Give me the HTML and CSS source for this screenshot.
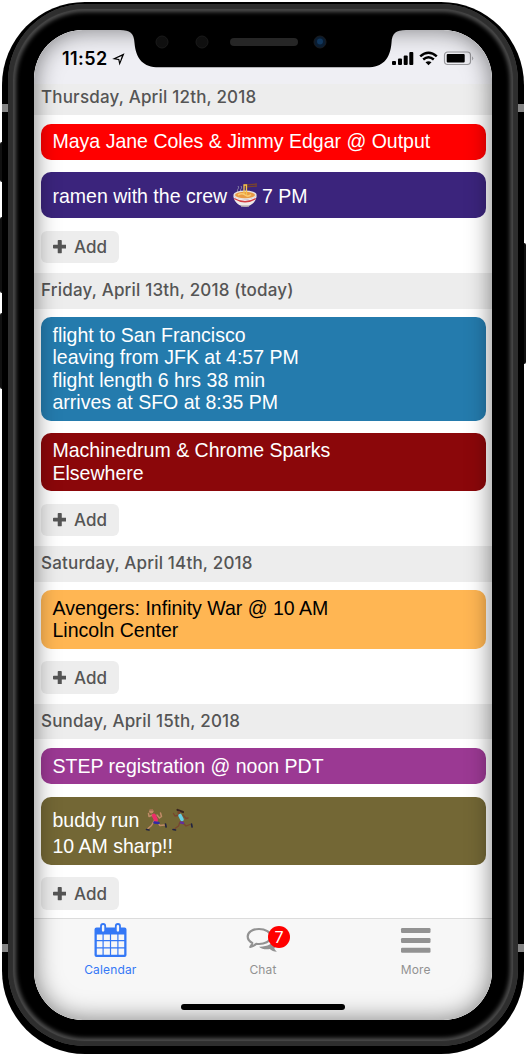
FILE: index.html
```html
<!DOCTYPE html>
<html lang="en">
<head>
<meta charset="utf-8">
<title>Calendar</title>
<link rel="stylesheet" href="styles.css">
</head>
<body>
<svg class="defs" width="0" height="0" aria-hidden="true">
  <symbol id="plus" viewBox="0 0 14 14"><path d="M5.700 0h2.600q.8 0 .8.8v4.100h4.100q.8 0 .8.8v2.400q0 .8-.8.800H9.100v4.300q0 .8-.8.8H5.700q-.8 0-.8-.8V8.900H.8q-.8 0-.8-.8V5.700q0-.8.8-.8h4.100V.8q0-.8.8-.8z"/></symbol>
</svg>
<div class="device">
  <i class="button mute"></i><i class="button vol-up"></i><i class="button vol-down"></i><i class="button power"></i>
  <div class="shell"></div>
  <i class="antenna at-left at-top"></i><i class="antenna at-right at-top"></i>
  <i class="antenna at-left at-bottom"></i><i class="antenna at-right at-bottom"></i>
  <div class="bezel"></div>
  <div class="screen">
    <header class="status">
      <span class="time">11:52</span>
      <svg class="location" width="13" height="13" viewBox="0 0 13 13"><path d="M12.500.3 7.500 12.500 6.300 7 .2 6z M9.800 2.900 4 5.500 7.300 6.100 7.900 8.700z" fill="#000" fill-rule="evenodd"/></svg>
      <svg class="signals" width="84" height="18" viewBox="0 0 84 18">
        <g fill="#000"><rect x="2" y="11" width="4" height="4" rx="1"/><rect x="8" y="8.500" width="4" height="6.500" rx="1"/><rect x="13.700" y="5.500" width="4" height="9.500" rx="1"/><rect x="19.300" y="2" width="4" height="13" rx="1"/></g>
        <g fill="none" stroke="#000" stroke-width="2.500"><path d="M30.200 6.400q8.300-7.200 16.600 0"/><path d="M33.200 9.500q5.300-4.500 10.600 0"/></g>
        <path d="M35.500 12.300q3-2.300 6 0l-3 3z"/>
        <rect x="54.500" y="2" width="26" height="12.500" rx="3.200" fill="none" stroke="#9a9a9e" stroke-width="1.200"/>
        <rect x="56.700" y="4" width="18" height="8.600" rx="1"/>
        <path d="M82.200 6.200q2 2 0 4.400z" fill="#9a9a9e"/>
      </svg>
    </header>
    <main class="days">
      <section class="day">
        <h2 class="date clipped">Thursday, April 12th, 2018</h2>
        <div class="list">
          <div class="event red">Maya Jane Coles &amp; Jimmy Edgar @ Output</div>
          <div class="event indigo">ramen with the crew <svg class="bowl" role="img" aria-label="ramen" width="26" height="26" viewBox="0 0 26 26">
            <path d="M6 10c-2-3 2-3 0-6M9 10c-2-3 2-3 0-6" stroke="#8e86aa" stroke-width="1" fill="none"/>
            <path d="M12 3.200 25 2M12 5.200l13-1.200" stroke="#77432f" stroke-width="1.300"/>
            <ellipse cx="13" cy="13" rx="11.700" ry="4.600" fill="#e8e1dd"/><ellipse cx="13" cy="13" rx="10" ry="3.300" fill="#e99a45"/>
            <path d="M12 13V3h2.500v11" stroke="#f4c34d" stroke-width="1.300" fill="none"/><path d="M6 13q4-2.500 7 0t6-.5" stroke="#f8cb73" stroke-width="1.500" fill="none"/>
            <path d="M1.300 13.500C2 21 8 24.500 13 24.500S24 21 24.700 13.500C20 18.500 6 18.500 1.300 13.500z" fill="#efeae8"/>
            <path d="M2.200 16.500q10.800 6.500 21.600 0" stroke="#d33b40" stroke-width="1.300" fill="none"/><path d="M9 24h8" stroke="#bcb3b0" stroke-width="1.500"/>
          </svg> 7 PM</div>
          <button class="add"><svg class="plus"><use href="#plus"/></svg>Add</button>
        </div>
      </section>
      <section class="day">
        <h2 class="date">Friday, April 13th, 2018 (today)</h2>
        <div class="list">
          <div class="event blue">flight to San Francisco<br>leaving from JFK at 4:57 PM<br>flight length 6 hrs 38 min<br>arrives at SFO at 8:35 PM</div>
          <div class="event maroon">Machinedrum &amp; Chrome Sparks<br>Elsewhere</div>
          <button class="add"><svg class="plus"><use href="#plus"/></svg>Add</button>
        </div>
      </section>
      <section class="day">
        <h2 class="date">Saturday, April 14th, 2018</h2>
        <div class="list">
          <div class="event orange">Avengers: Infinity War @ 10 AM<br>Lincoln Center</div>
          <button class="add"><svg class="plus"><use href="#plus"/></svg>Add</button>
        </div>
      </section>
      <section class="day">
        <h2 class="date">Sunday, April 15th, 2018</h2>
        <div class="list">
          <div class="event purple">STEP registration @ noon PDT</div>
          <div class="event olive">buddy run <svg class="runners" role="img" aria-label="two runners" width="50" height="24" viewBox="0 0 50 24">
            <g fill="none" stroke-linecap="round" stroke-linejoin="round">
              <path d="M9 13 6.500 17.500 3 20.500M12 14l3 3.500 4.500-.5M7.500 7 4 8.500 3.500 5.500M12 7l2.500 3 2-1.500-1-3.500" stroke="#c08a66" stroke-width="1.500"/>
              <path d="M8.800 7.500 11 12" stroke="#ed2e6a" stroke-width="4"/>
              <path d="M9.500 14.500 13.500 15" stroke="#302aa5" stroke-width="2.600"/>
              <path d="M1.500 21.500 4 22M20.500 16l.6 3" stroke="#202342" stroke-width="1.600"/>
              <path d="M35 14l-1.500 4-3.500 2.500M38 15l3 3 4-1.500M34.500 7 30 8l-1.500-2.500M38 7l3 3.500 2-.5" stroke="#79452f" stroke-width="1.300"/>
              <path d="M35 7.500 37 11.500" stroke="#65cfe4" stroke-width="3.600"/>
              <path d="M36 14.500 38 15" stroke="#652d98" stroke-width="2.600"/>
              <path d="M32.500 2 38 4" stroke="#38241f" stroke-width="2.200"/>
              <path d="M28 21.500l2.500.5M46.500 16l.6 3" stroke="#202342" stroke-width="1.600"/>
            </g>
            <circle cx="6.300" cy="3.300" r="2.200" fill="#c08a66"/><path d="M4.200 2.500Q6 0 8.500 2.500z" fill="#926045"/><circle cx="34" cy="4.500" r="1.600" fill="#79452f"/>
          </svg><br>10 AM sharp!!</div>
          <button class="add"><svg class="plus"><use href="#plus"/></svg>Add</button>
        </div>
      </section>
    </main>
    <nav class="tabs">
      <a class="tab active">
        <svg class="tab-icon" width="34" height="36" viewBox="0 0 34 36">
          <path fill="#3478f6" fill-rule="evenodd" d="M3.500 5.500h28q2 0 2 2V33q0 2-2 2h-28q-2 0-2-2V7.500q0-2 2-2zM3.800 12.500V18h5.700v-5.500zM10.700 12.500V18h6.200v-5.500zM18.100 12.500V18h6.200v-5.500zM25.500 12.500V18h5.700v-5.500zM3.800 19.200v6h5.700v-6zM10.700 19.200v6h6.200v-6zM18.100 19.200v6h6.200v-6zM25.500 19.200v6h5.700v-6zM3.800 26.400v6.300h5.700v-6.300zM10.700 26.400v6.300h6.200v-6.300zM18.100 26.400v6.300h6.200v-6.300zM25.500 26.400v6.300h5.700v-6.300z"/>
          <g fill="#f7f7f7" stroke="#3478f6" stroke-width="1.800"><rect x="8" y="2" width="4.200" height="8.500" rx="2.100"/><rect x="22.800" y="2" width="4.200" height="8.500" rx="2.100"/></g>
        </svg>
        <span>Calendar</span>
      </a>
      <a class="tab">
        <span class="chat-icon">
          <svg class="tab-icon" width="34" height="36" viewBox="0 0 34 36">
            <path d="M13 7C6.500 7 1.700 10.300 1.700 14.600c0 2.600 1.700 4.900 4.600 6.300-.3 1.800-1 2.900-2 4 2.500-.4 4.500-1.500 6-3.100 8.300 1 14.500-2.600 14.500-7.200C24.800 10.300 19.500 7 13 7z" fill="none" stroke="#929292" stroke-width="2.200" stroke-linejoin="round"/>
            <path d="M13 24.700c8 .3 14-2.700 15.800-8.400 3.800 3.500 3.300 7.200-.5 9.600.4 1.700 1.300 2.600 2.700 3.900-3.300-.1-5.500-1-7.300-2.700-4.200.6-8.200-.1-10.700-2.400z" fill="#929292"/>
          </svg>
          <b class="badge">7</b>
        </span>
        <span>Chat</span>
      </a>
      <a class="tab">
        <svg class="tab-icon" width="34" height="36" viewBox="0 0 34 36"><g fill="#929292"><rect x="2" y="6" width="29.500" height="5" rx="1.200"/><rect x="2" y="16" width="29.500" height="5" rx="1.200"/><rect x="2" y="25.700" width="29.500" height="5" rx="1.200"/></g></svg>
        <span>More</span>
      </a>
      <i class="home"></i>
    </nav>
    <div class="inner-shadow"></div>
  </div>
  <svg class="notch" width="286" height="40" viewBox="0 0 286 40">
    <path d="M0 0V2C10 2 14 5 14.500 15 16 31 23 39.300 39 39.300H247C263 39.300 270 31 271.500 15 272 5 276 2 286 2V0z" fill="#000"/>
    <g fill="#0f0f0f" stroke="#1a1a1a"><circle cx="42" cy="14" r="6"/><circle cx="82" cy="14" r="6"/></g>
    <rect x="110" y="10" width="68" height="8" rx="4" fill="#262626"/>
    <circle cx="200" cy="14" r="6" fill="#0a1c30" stroke="#1a1c20"/><circle cx="200" cy="13.500" r="3" fill="#10365c"/>
  </svg>
</div>
</body>
</html>
```
FILE: styles.css
```css
* { box-sizing: border-box; }
body { margin: 0; background: #fff; overflow: hidden; }
.defs { position: absolute; }

/* Device frame */
.device { position: relative; width: 526px; height: 1054px; padding: 30px 34px 34px; }
.shell { position: absolute; inset: 2px 2px 0; border-radius: 83px; background: #000; }
.bezel {
  position: absolute; inset: 4px 8px 8px; border-radius: 77px; background: #000;
  box-shadow: inset 0 0 1px 5px #2e2e2e, inset 0 0 4px 8px #525252;
}
.button { position: absolute; width: 5px; background: #111; border-radius: 2px; }
.mute { left: 0; top: 142px; height: 40px; }
.vol-up { left: 0; top: 217px; height: 76px; }
.vol-down { left: 0; top: 313px; height: 76px; }
.power { right: 0; top: 243px; height: 121px; }
.antenna { position: absolute; width: 6px; height: 8px; background: #858585; }
.at-left { left: 2px; }
.at-right { right: 2px; }
.at-top { top: 104px; }
.at-bottom { top: 944px; }
.notch { position: absolute; left: 120px; top: 28px; }

/* Screen */
.screen {
  position: relative; display: flex; flex-direction: column; width: 458px; height: 990px;
  border-radius: 49px; overflow: hidden; background: #fff;
  font-family: Inter, "Liberation Sans", sans-serif;
}
.inner-shadow { position: absolute; inset: 0; border-radius: 49px; box-shadow: inset 0 0 24px rgba(0, 0, 0, .5); pointer-events: none; }
.status { display: flex; flex: none; height: 54px; padding: 18px 18px 0 28px; background: #efeff4; }
.time { font-size: 18px; line-height: 22px; font-weight: 600; letter-spacing: .4px; }
.location { margin: 5px 0 0 4px; }
.signals { margin: 2px 0 0 auto; }

.days { flex: 1; min-height: 0; }
.date {
  height: 35.4px; margin: 0; padding-left: 7px; background: #ededed; color: #555;
  font-size: 17px; line-height: 34px; font-weight: 550; letter-spacing: .19px; white-space: nowrap;
}
.date.clipped { height: 31px; line-height: 26px; }
.list { display: flex; flex-direction: column; align-items: flex-start; gap: 12.3px; padding: 8.700px 6.500px 10px; }
.event {
  width: 100%; padding: 6.600px 12px 7.400px; border-radius: 10px; color: #fff;
  font: 19.520px/22.300px "Liberation Sans", Arial, sans-serif; white-space: nowrap;
}
.red { background: #f00; }
.indigo { background: #3b247c; height: 46px; padding-top: 13px; }
.blue { background: #247bad; }
.maroon { background: #8b070a; }
.orange { background: #ffb653; color: #000; }
.purple { background: #9b3993; }
.olive { background: #736735; height: 68.500px; line-height: 25.400px; padding-top: 11.500px; }
.bowl { margin: -6px -1px -2px; vertical-align: -3px; }
.runners { margin: -6px 0 -2px; vertical-align: -3px; }
.add {
  display: flex; align-items: center; gap: 8px; height: 32.7px; width: 78px; padding: 0 0 0 12px;
  border: 0; border-radius: 6px; background: #ededed; color: #555;
  font: 550 17px Inter, sans-serif;
}
.plus { width: 13.500px; height: 13.500px; fill: #555; }

/* Tab bar */
.tabs {
  position: relative; display: grid; grid-template-columns: repeat(3, 1fr); flex: none; height: 102px;
  border-top: 1px solid #dcdcdc; background: #f7f7f7;
}
.tab { display: flex; flex-direction: column; align-items: center; gap: 4px; padding-top: 3px; color: #929292; font-size: 12px; line-height: 15px; letter-spacing: .15px; }
.tab.active { color: #3478f6; }
.tab-icon { display: block; }
.chat-icon { position: relative; }
.badge { position: absolute; left: 22px; top: 4px; width: 22px; height: 22px; border-radius: 50%; background: #f00; color: #fff; font-size: 16px; line-height: 22px; font-weight: 400; text-align: center; }
.home { position: absolute; left: 147px; bottom: 10px; width: 164px; height: 6px; border-radius: 3px; background: #000; }
```
